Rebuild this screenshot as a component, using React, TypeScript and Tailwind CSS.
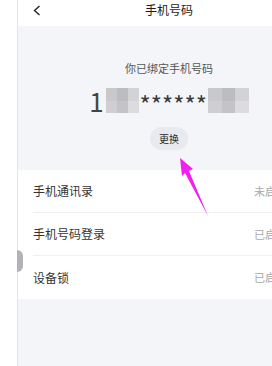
import React from "react";

const font = { fontFamily: '"Noto Sans CJK SC", "Noto Sans", sans-serif' };

const Blur = ({ className }: { className: string }) => (
  <span className={`inline-grid grid-cols-3 grid-rows-2 ${className}`}>
    <span className="bg-[#c9c9cc]" />
    <span className="bg-[#bdbdc1]" />
    <span className="bg-[#d3d3d6]" />
    <span className="bg-[#cfcfd2]" />
    <span className="bg-[#c4c4c8]" />
    <span className="bg-[#dcdcdf]" />
  </span>
);

const rows = [
  { label: "手机通讯录", value: "未启用" },
  { label: "手机号码登录", value: "已启用" },
  { label: "设备锁", value: "已启用" },
];

const App = () => {
  return (
    <div className="w-[272px] h-[366px] overflow-hidden bg-white flex relative" style={font}>
      <div className="w-[18px] shrink-0 bg-white border-r border-[#e6e6e9] relative">
        <div className="absolute left-[17px] top-[250px] w-[6px] h-[22px] rounded-r-full bg-[#b3b3b7]" />
      </div>

      <div className="w-[302px] shrink-0 flex flex-col bg-[#f4f5f9]">
        <div className="h-[26px] bg-white flex items-start pt-[3px] relative">
          <svg className="absolute left-[14px] top-[5px]" width="10" height="11" viewBox="0 0 10 11">
            <path d="M7.5 1 L2.5 5.5 L7.5 10" fill="none" stroke="#222" strokeWidth="1.4" />
          </svg>
          <div className="w-full text-center text-[12px] leading-[14px] text-[#1a1a1a]">手机号码</div>
        </div>

        <div className="h-[144px] flex flex-col items-center">
          <div className="mt-[35px] text-[11px] leading-[14px] text-[#555]">你已绑定手机号码</div>
          <div className="mt-[13px] h-[25px] flex items-center text-[#3a3a3a]">
            <span className="text-[26px] leading-[24px] text-[#444]">1</span>
            <Blur className="w-[33px] h-[25px] ml-[2px]" />
            <span className="text-[24px] leading-[20px] mt-[6px] ml-[1px]">******</span>
            <Blur className="w-[41px] h-[25px] ml-[1px]" />
          </div>
          <div className="mt-[14px] h-[23px] px-[9px] rounded-full bg-[#e8eaf0] flex items-center text-[10px] text-[#2a2a2a]">
            更换
          </div>
        </div>

        <div className="bg-white flex flex-col pl-[15px]">
          {rows.map((r, i) => (
            <div
              key={r.label}
              className={`h-[43px] flex items-center justify-between pr-[33px] ${i < rows.length - 1 ? "border-b border-[#f0f0f2]" : ""}`}
            >
              <span className="text-[12px] text-[#333]">{r.label}</span>
              <span className="text-[11px] text-[#a8a8ad]">{r.value}</span>
            </div>
          ))}
        </div>
        <div className="flex-1" />
      </div>

      <svg className="absolute left-0 top-0 pointer-events-none" width="272" height="366">
        <polygon points="180,158 193,169 189,171 208,216 185,173 182,176" fill="#f020f0" />
      </svg>
    </div>
  );
};

export default App;
